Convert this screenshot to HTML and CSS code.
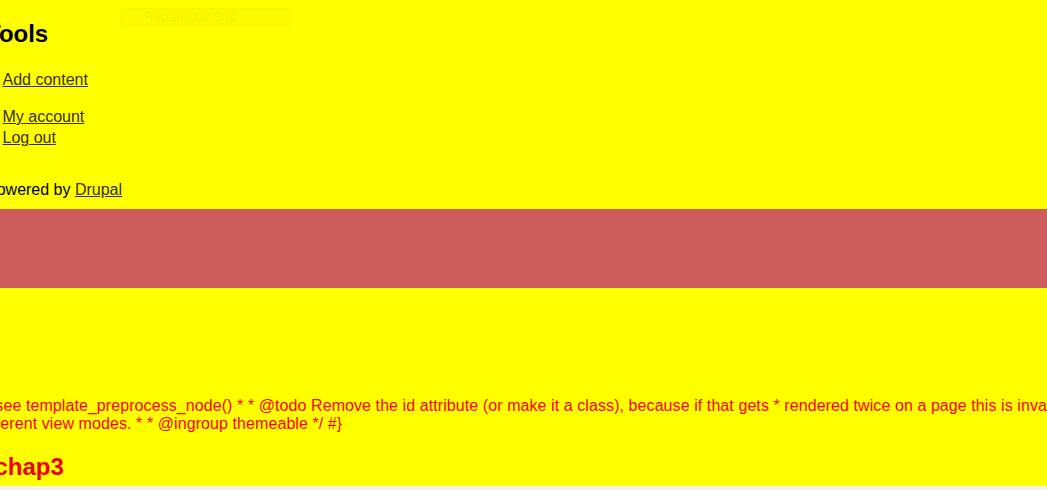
FILE: index.html
```html
<!DOCTYPE html>
<html lang="en">
<head>
<meta charset="utf-8">
<title>Tools</title>
<link rel="stylesheet" href="styles.css">
</head>
<body>
<div class="page">
  <div class="sidebar">
    <h2 class="block-title">Tools</h2>
    <ul class="menu menu-first">
      <li><a href="#">Add content</a></li>
    </ul>
    <ul class="menu menu-second">
      <li><a href="#">My account</a></li>
      <li><a href="#">Log out</a></li>
    </ul>
    <p class="powered">Powered by <a href="#">Drupal</a></p>
  </div>
  <div class="band"></div>
  <div class="content">
    <p class="comment">@see template_preprocess_node() * * @todo Remove the id attribute (or make it a class), because if that gets * rendered twice on a page this is invalid CSS * for example: two lists in<br>different view modes. * * @ingroup themeable */ #}</p>
    <h2 class="node-title">chap3</h2>
  </div>
</div>
<div class="snip"><span>Rectangular Snip</span></div>
</body>
</html>
```

FILE: styles.css
```css
html, body {
  margin: 0;
  padding: 0;
  overflow: hidden;
  background: #f2f2f2;
}
body {
  font-family: "Liberation Sans", Arial, sans-serif;
  font-size: 16px;
  color: #000;
  width: 1047px;
  height: 490px;
  position: relative;
}
.page {
  background: #ffff00;
  height: 486px;
  overflow: hidden;
}
.sidebar {
  padding-top: 20px;
}
.block-title {
  margin: 0 0 0 -14px;
  font-size: 24px;
  line-height: 28px;
  font-weight: bold;
}
.menu {
  list-style: none;
  margin: 0;
  padding: 0 0 0 2.5px;
  line-height: 21px;
}
.menu a, .powered a {
  color: #3a3000;
  text-decoration: underline;
}
.menu-first {
  margin-top: 21px;
}
.menu-second {
  margin-top: 16px;
}
.powered {
  margin: 31px 0 0 -14px;
  line-height: 21px;
}
.band {
  background: #cd5c5c;
  height: 79px;
  margin-top: 9px;
}
.content {
  padding-top: 109px;
}
.comment {
  margin: 0 0 0 -21px;
  color: #ff0000;
  line-height: 18px;
  letter-spacing: 0.08px;
  white-space: nowrap;
}
.node-title {
  margin: 20px 0 0 -5.5px;
  color: #ee0000;
  font-size: 24px;
  line-height: 28px;
  font-weight: bold;
}
.snip {
  position: absolute;
  left: 120px;
  top: 8px;
  width: 172px;
  height: 18px;
  background: rgba(0, 0, 0, 0.015);
  border: 1px solid rgba(0, 0, 0, 0.02);
  box-sizing: border-box;
  font-size: 12px;
  line-height: 16px;
  text-align: center;
  color: rgba(0, 0, 0, 0.06);
}
.snip span {
  margin-left: -30px;
}
```
